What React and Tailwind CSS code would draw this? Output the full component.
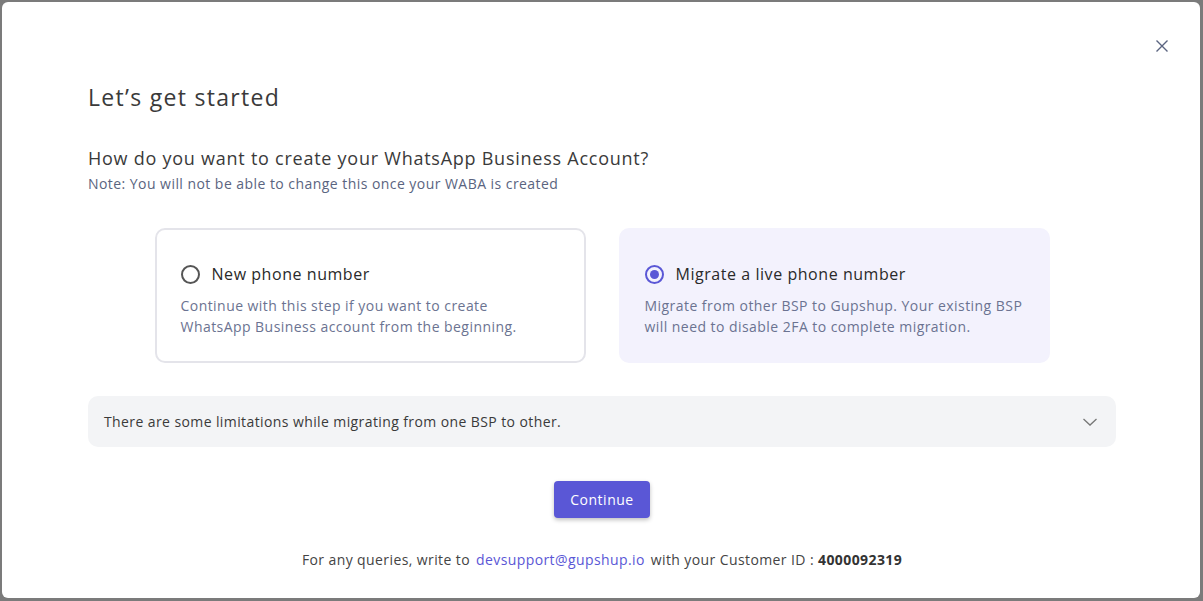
import React from "react";

const font = { fontFamily: '"Open Sans", "Noto Sans", sans-serif' };

function Radio({ checked }) {
  return checked ? (
    <span className="flex h-[19px] w-[19px] shrink-0 items-center justify-center rounded-full border-2 border-[#5a57d6]">
      <span className="h-[9px] w-[9px] rounded-full bg-[#5a57d6]" />
    </span>
  ) : (
    <span className="h-[19px] w-[19px] shrink-0 rounded-full border-2 border-[#555]" />
  );
}

export default function App() {
  return (
    <div className="flex h-[601px] w-[1203px] bg-[#7b7b7b] p-[2px] pb-[3px] pr-[3px]" style={font}>
      <div className="relative flex flex-1 flex-col rounded-[6px] bg-white pl-[86px] pr-[84px] pt-[79px]">
        <button className="absolute right-[31px] top-[37px] text-[#5a6480]">
          <svg width="14" height="14" viewBox="0 0 14 14" fill="none" stroke="currentColor" strokeWidth="1.4">
            <path d="M1.5 1.5L12.5 12.5M12.5 1.5L1.5 12.5" />
          </svg>
        </button>
        <h1 className="text-[23px] leading-[32px] font-medium tracking-[1.3px] text-[#3a3a3a]">Let’s get started</h1>
        <h2 className="mt-[32px] text-[18px] leading-[26px] font-medium tracking-[0.75px] text-[#3a3a3a]">
          How do you want to create your WhatsApp Business Account?
        </h2>
        <p className="mt-[3px] text-[14px] leading-[20px] tracking-[0.45px] text-[#5a6480]">
          Note: You will not be able to change this once your WABA is created
        </p>
        <div className="mt-[34px] flex justify-center gap-[33px]">
          <div className="flex h-[135px] w-[431px] flex-col rounded-[10px] border-2 border-[#e4e4ea] px-[24px] pt-[32px]">
            <div className="flex items-center gap-[12px]">
              <Radio />
              <span className="text-[16px] leading-[24px] tracking-[0.55px] text-[#2a2a2a]">New phone number</span>
            </div>
            <p className="mt-[9px] text-[14px] leading-[21px] tracking-[0.45px] text-[#6b7391]">
              Continue with this step if you want to create
              <br />
              WhatsApp Business account from the beginning.
            </p>
          </div>
          <div className="flex h-[135px] w-[431px] flex-col rounded-[10px] bg-[#f3f2fd] px-[26px] pt-[34px]">
            <div className="flex items-center gap-[12px]">
              <Radio checked />
              <span className="text-[16px] leading-[24px] tracking-[0.55px] text-[#2a2a2a]">Migrate a live phone number</span>
            </div>
            <p className="mt-[9px] text-[14px] leading-[21px] tracking-[0.45px] text-[#6b7391]">
              Migrate from other BSP to Gupshup. Your existing BSP
              <br />
              will need to disable 2FA to complete migration.
            </p>
          </div>
        </div>
        <div className="mt-[33px] flex h-[51px] items-center justify-between rounded-[10px] bg-[#f3f4f6] pl-[16px] pr-[18px]">
          <span className="text-[14px] tracking-[0.4px] text-[#3a3a3a]">
            There are some limitations while migrating from one BSP to other.
          </span>
          <svg width="16" height="10" viewBox="0 0 16 10" fill="none" stroke="#777" strokeWidth="1.3">
            <path d="M1.5 2L8 8L14.5 2" />
          </svg>
        </div>
        <div className="mt-[34px] flex justify-center">
          <button className="h-[37px] w-[96px] rounded-[4px] bg-[#5a57d6] text-[14px] font-medium tracking-[0.5px] text-white shadow-[0_2px_4px_rgba(0,0,0,0.25)]">
            Continue
          </button>
        </div>
        <p className="mt-[31px] text-center text-[14px] tracking-[0.4px] text-[#444]">
          For any queries, write to{" "}
          <span className="mx-[2px] text-[#5a57d6]">devsupport@gupshup.io</span> with your Customer ID :{" "}
          <span className="font-bold text-[#333]">4000092319</span>
        </p>
      </div>
    </div>
  );
}
